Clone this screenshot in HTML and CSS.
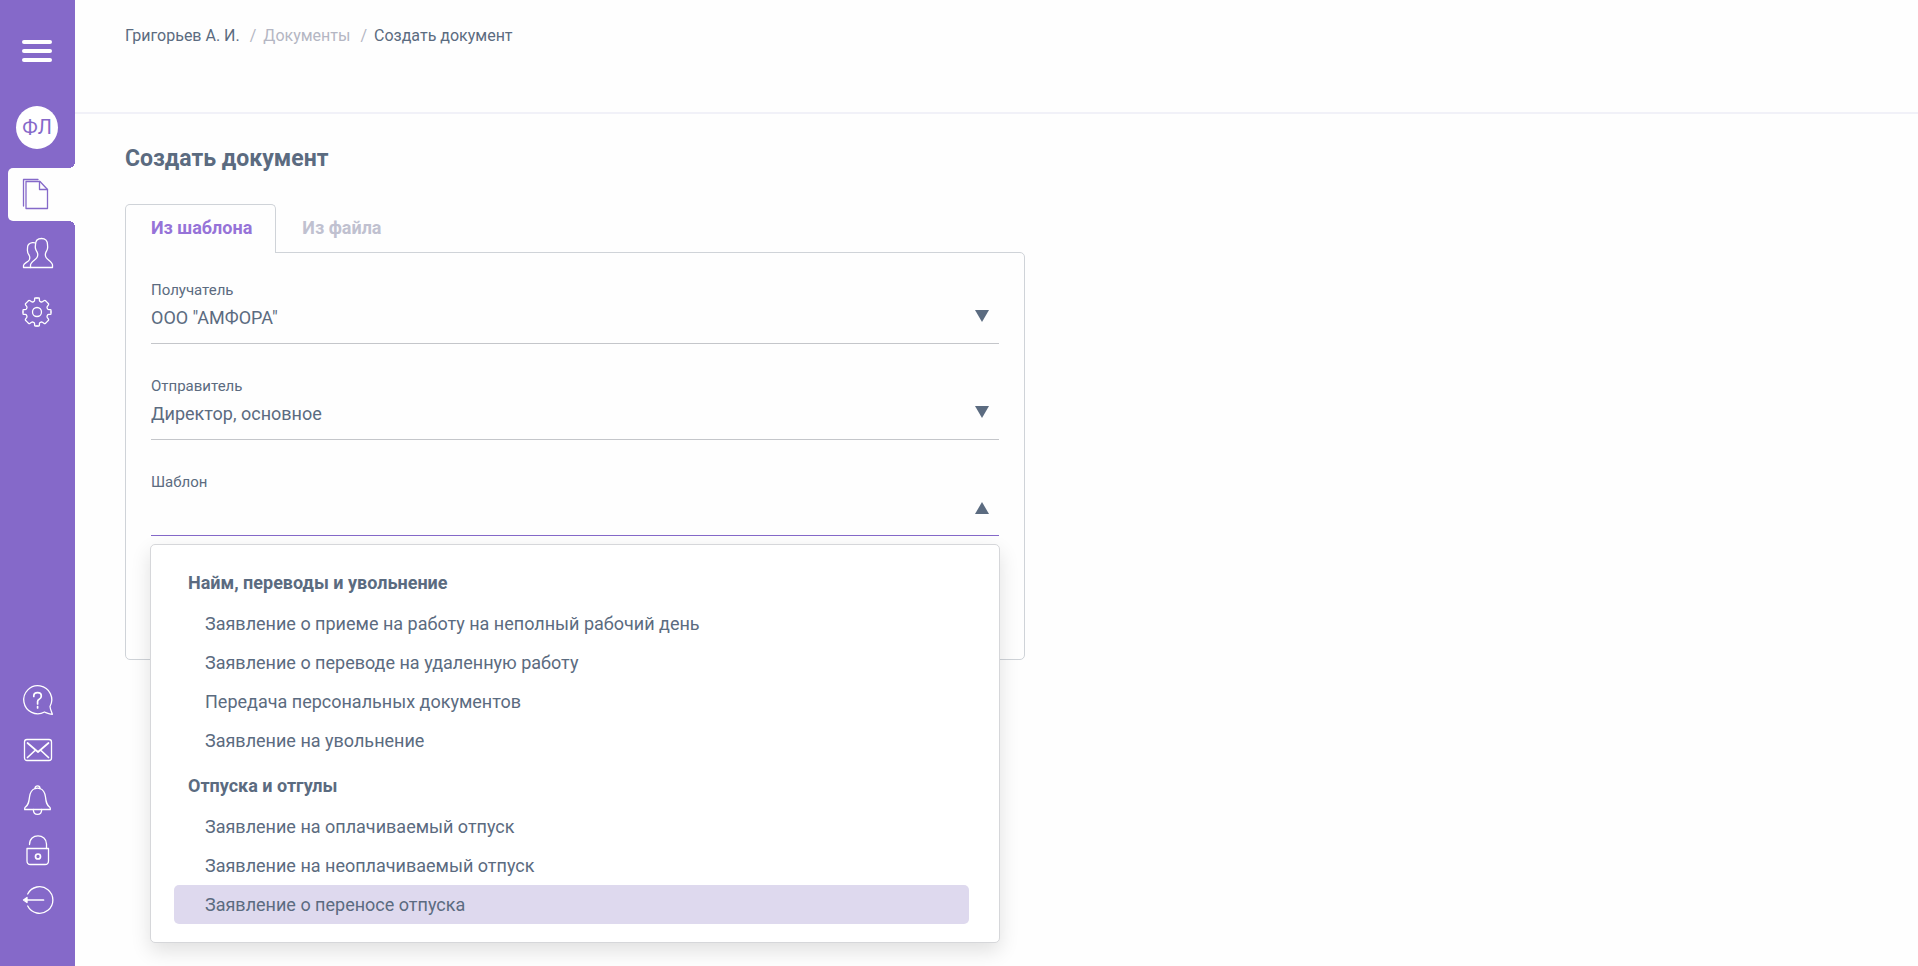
FILE: index.html
```html
<!DOCTYPE html>
<html lang="ru">
<head>
    <meta charset="UTF-8">
    <meta name="viewport" content="width=device-width, initial-scale=1.0">
    <title>Создать документ</title>
    <link rel="stylesheet" href="styles.css">
</head>
<body>
    <aside class="sidebar">
        <button class="burger" type="button" aria-label="Меню">
            <span></span><span></span><span></span>
        </button>
        <a href="#" class="avatar">ФЛ</a>

        <nav class="nav">
            <a href="#" class="nav-item active" aria-label="Документы">
                <svg class="icon" viewBox="0 0 30 30">
                    <path d="M.5 27V.5H15"/>
                    <path d="M3 2.500H17L24.500 10.500V29.500H3Z"/>
                    <path d="M16.500 2.500V10.500H24.500"/>
                </svg>
            </a>
            <a href="#" class="nav-item" aria-label="Сотрудники">
                <svg class="icon" viewBox="0 0 30 30">
                    <path d="M18.500.5c-4 0-6 2.500-6 6 0 1.500-.5 2 0 4 .4 2 1.200 2.500 1.800 4 .6 1.600.6 3.500-.3 5-1.400 2.300-6.500 4.500-6.500 7.500v2.500h22v-2.500c0-3-5-5.200-6.400-7.500-.9-1.500-.9-3.400-.3-5 .6-1.500 1.400-2 1.700-4 .4-2 0-2.500 0-4 0-3.500-2-6-6-6z"/>
                    <path d="M12.500 5C11.500 4.500 7.500 4 5.500 6.500c-1.200 1.500-1 3-1 4.500-.3 2 0 4 1.500 6 1 1.800 1 3.500.2 5C5 24 .5 25.500.5 27.500v2h7"/>
                </svg>
            </a>
            <a href="#" class="nav-item" aria-label="Настройки">
                <svg class="icon" viewBox="-14 -15 30 30">
                    <g id="tooth"><path d="M0-14H1.700Q2.400-14 2.400-13.300V-11.800Q2.400-10.700 3.400-10.400 4.600-9.700 5.400-10.200L6.900-11.300Q7.700-11.900 8.300-11.500L9.900-9.900 11.500-8.300Q11.900-7.700 11.300-6.900L10.200-5.400Q9.700-4.600 10.400-3.400 10.700-2.400 11.800-2.400H13.300Q14-2.400 14-1.700V0"/></g>
                    <use href="#tooth" transform="rotate(90)"/>
                    <use href="#tooth" transform="rotate(180)"/>
                    <use href="#tooth" transform="rotate(270)"/>
                    <circle r="4.500"/>
                </svg>
            </a>
        </nav>

        <nav class="nav-bottom">
            <a href="#" class="nav-link" aria-label="Помощь">
                <svg class="icon" viewBox="0 0 30 30">
                    <path d="M27 21.500A14 14 0 1 0 21.500 27C24 28 26.500 29.300 29.300 29.300 29.500 28 27.500 26 27 21.500Z"/>
                    <path class="bold" d="M10.800 11.500V10.500Q11 7.700 14.500 7.700 18.300 7.700 18.300 11 18.300 13.300 16.200 14.200 14.600 15 14.600 16.500V19M14.600 21.500V23"/>
                </svg>
            </a>
            <a href="#" class="nav-link" aria-label="Сообщения">
                <svg class="icon" viewBox="0 0 30 30">
                    <rect x="1.500" y="4.500" width="27" height="21" rx="2.500"/>
                    <path class="bold" d="M4.500 8 15 17 25.500 8M4.500 22.500 12 15.500M25.500 22.500 18 15.500"/>
                </svg>
            </a>
            <a href="#" class="nav-link" aria-label="Уведомления">
                <svg class="icon" viewBox="0 0 30 30">
                    <path d="M12 3.500C8 5 7 8 6.500 12 6 17 5.500 20 2 22.500Q1.500 23.500 1.700 24.500H27.300Q27.500 23.500 27 22.500C23.500 20 23 17 22.500 12 22 8 21 5 17 3.500Q14.500 2.800 12 3.500Z"/>
                    <path d="M12 3.500C12 0 17 0 17 3.500M10.300 24.500C10.500 31 18.500 31 18.700 24.500"/>
                </svg>
            </a>
            <a href="#" class="nav-link" aria-label="Доступ">
                <svg class="icon" viewBox="0 0 30 30">
                    <path d="M4 13.500H25.500V26Q25.500 29.500 22 29.500H7.500Q4 29.500 4 26Z"/>
                    <path d="M6.500 9.500C6.500 3.500 10.500 .8 15 .8S23.500 4 23.500 9V13.500"/>
                    <circle class="bold" cx="15" cy="21.500" r="2.500"/>
                </svg>
            </a>
            <a href="#" class="nav-link" aria-label="Выход">
                <svg class="icon" viewBox="0 0 30 30">
                    <path d="M4.700 9A13.300 13.300 0 1 1 4.700 21"/>
                    <path class="bold" d="M20.500 15H3"/>
                    <path class="fill" d="M.5 15 4 12.500V17.500Z"/>
                </svg>
            </a>
        </nav>
    </aside>

    <main class="page">
        <header class="header">
            <nav class="breadcrumbs">
                <a href="#">Григорьев А. И.</a>
                <span class="slash">/</span>
                <a href="#" class="muted">Документы</a>
                <span class="slash">/</span>
                <span>Создать документ</span>
            </nav>
        </header>

        <section class="content">
            <h1>Создать документ</h1>

            <div class="tabs">
                <button class="tab active" type="button">Из шаблона</button>
                <button class="tab" type="button">Из файла</button>
            </div>

            <form class="panel">
                <div class="field">
                    <label for="recipient">Получатель</label>
                    <select id="recipient">
                        <option>ООО "АМФОРА"</option>
                    </select>
                    <svg class="arrow" viewBox="0 0 14 12"><path d="M0 0H14L7 12Z"/></svg>
                </div>
                <div class="field">
                    <label for="sender">Отправитель</label>
                    <select id="sender">
                        <option>Директор, основное</option>
                    </select>
                    <svg class="arrow" viewBox="0 0 14 12"><path d="M0 0H14L7 12Z"/></svg>
                </div>
                <div class="field open">
                    <label for="template">Шаблон</label>
                    <select id="template">
                        <option></option>
                    </select>
                    <svg class="arrow" viewBox="0 0 14 12"><path d="M0 12H14L7 0Z"/></svg>

                    <div class="dropdown">
                        <h2>Найм, переводы и увольнение</h2>
                        <button class="option" type="button">Заявление о приеме на работу на неполный рабочий день</button>
                        <button class="option" type="button">Заявление о переводе на удаленную работу</button>
                        <button class="option" type="button">Передача персональных документов</button>
                        <button class="option" type="button">Заявление на увольнение</button>
                        <h2>Отпуска и отгулы</h2>
                        <button class="option" type="button">Заявление на оплачиваемый отпуск</button>
                        <button class="option" type="button">Заявление на неоплачиваемый отпуск</button>
                        <button class="option selected" type="button">Заявление о переносе отпуска</button>
                    </div>
                </div>
            </form>
        </section>
    </main>
</body>
</html>
```
FILE: styles.css
```css
* {
    box-sizing: border-box;
}
body {
    margin: 0;
    min-height: 100vh;
    display: flex;
    font-family: Roboto, "Liberation Sans", sans-serif;
    font-size: 18px;
    color: #5b6b80;
    background: #fefefe;
}
a {
    color: inherit;
    text-decoration: none;
}
button,
select {
    font: inherit;
    color: inherit;
    border: none;
    background: none;
    padding: 0;
    cursor: pointer;
}

/* sidebar */
.sidebar {
    width: 75px;
    flex-shrink: 0;
    display: flex;
    flex-direction: column;
    padding: 40px 0 41px;
    background: #8569c9;
    color: #fff;
}
.burger {
    width: 30px;
    margin-left: 22px;
    display: flex;
    flex-direction: column;
    gap: 5px;
}
.burger span {
    height: 4px;
    width: 100%;
    border-radius: 2px;
    background: #fff;
}
.avatar {
    width: 42px;
    height: 43px;
    margin: 44px 0 19px 16px;
    border-radius: 50%;
    background: #fff;
    color: #8569c9;
    font-size: 20px;
    line-height: 43px;
    text-align: center;
}
.nav {
    display: flex;
    flex-direction: column;
    gap: 6px;
}
.nav-item {
    position: relative;
    height: 53px;
    margin-left: 8px;
    padding: 0 0 1px 15px;
    display: flex;
    align-items: center;
}
.nav-item.active {
    background: #fefefe;
    color: #8569c9;
    border-radius: 5px 0 0 5px;
}
.nav-item.active::before,
.nav-item.active::after {
    content: "";
    position: absolute;
    right: 0;
    width: 6px;
    height: 6px;
}
.nav-item.active::before {
    top: -6px;
    background: radial-gradient(circle at 0 0, transparent 6px, #fefefe 6px);
}
.nav-item.active::after {
    bottom: -6px;
    background: radial-gradient(circle at 0 100%, transparent 6px, #fefefe 6px);
}
.nav-bottom {
    margin-top: auto;
}
.nav-link {
    height: 50px;
    padding-left: 23px;
    display: flex;
    align-items: center;
}
.icon {
    width: 30px;
    height: 30px;
    fill: none;
    stroke: currentColor;
    stroke-width: 1.3;
    stroke-linejoin: round;
    stroke-linecap: round;
    overflow: visible;
}
.icon .bold {
    stroke-width: 1.7;
}
.icon .fill {
    fill: currentColor;
}

/* page */
.page {
    flex: 1;
}
.header {
    height: 114px;
    padding: 26px 50px 0;
    border-bottom: 2px solid #f1f1f8;
}
.breadcrumbs {
    display: flex;
    font-size: 16px;
    line-height: 20px;
}
.breadcrumbs .slash {
    margin: 0 7px 0 10px;
    color: #b4b6c3;
}
.breadcrumbs .muted {
    color: #b4b6c3;
}
.content {
    max-width: 1000px;
    padding: 31px 50px;
}
h1 {
    margin: 0 0 31px;
    font-size: 23px;
    line-height: 28px;
    font-weight: 700;
}

/* tabs */
.tabs {
    display: flex;
}
.tab {
    height: 48px;
    padding: 0 23px 2px 25px;
    border: 1px solid transparent;
    border-bottom: none;
    font-weight: 700;
    color: #c0c1d0;
}
.tab.active {
    position: relative;
    height: 49px;
    margin-bottom: -1px;
    padding-bottom: 3px;
    border-color: #cfd3d8;
    border-radius: 5px 5px 0 0;
    background: #fefefe;
    color: #9673d8;
}

/* form */
.panel {
    display: flex;
    flex-direction: column;
    gap: 32px;
    padding: 27px 25px 123px;
    border: 1px solid #cfd3d8;
    border-radius: 0 5px 5px 5px;
}
.field {
    position: relative;
    display: flex;
    flex-direction: column;
}
.field label {
    font-size: 15px;
    line-height: 20px;
}
.field select {
    appearance: none;
    height: 44px;
    padding-bottom: 8px;
    border-bottom: 1px solid #c4c6ca;
}
.field.open select {
    border-color: #8569c9;
}
.arrow {
    position: absolute;
    right: 10px;
    top: 30px;
    width: 14px;
    height: 12px;
    fill: #5b6b80;
    pointer-events: none;
}

/* template list */
.dropdown {
    position: absolute;
    z-index: 1;
    top: 100%;
    left: -1px;
    right: -1px;
    margin-top: 8px;
    padding: 18px 30px 18px 23px;
    border: 1px solid #d6d7da;
    border-radius: 5px;
    background: #fff;
    box-shadow: 0 8px 20px rgba(0, 0, 0, 0.12);
}
.dropdown h2 {
    margin: 0 0 1px;
    padding-left: 14px;
    font-size: 18px;
    line-height: 40px;
    font-weight: 700;
}
.option + h2 {
    margin-top: 6px;
}
.option {
    display: block;
    width: 100%;
    padding-left: 31px;
    border-radius: 5px;
    line-height: 39px;
    text-align: left;
}
.option.selected {
    background: #ded9ee;
}
```
